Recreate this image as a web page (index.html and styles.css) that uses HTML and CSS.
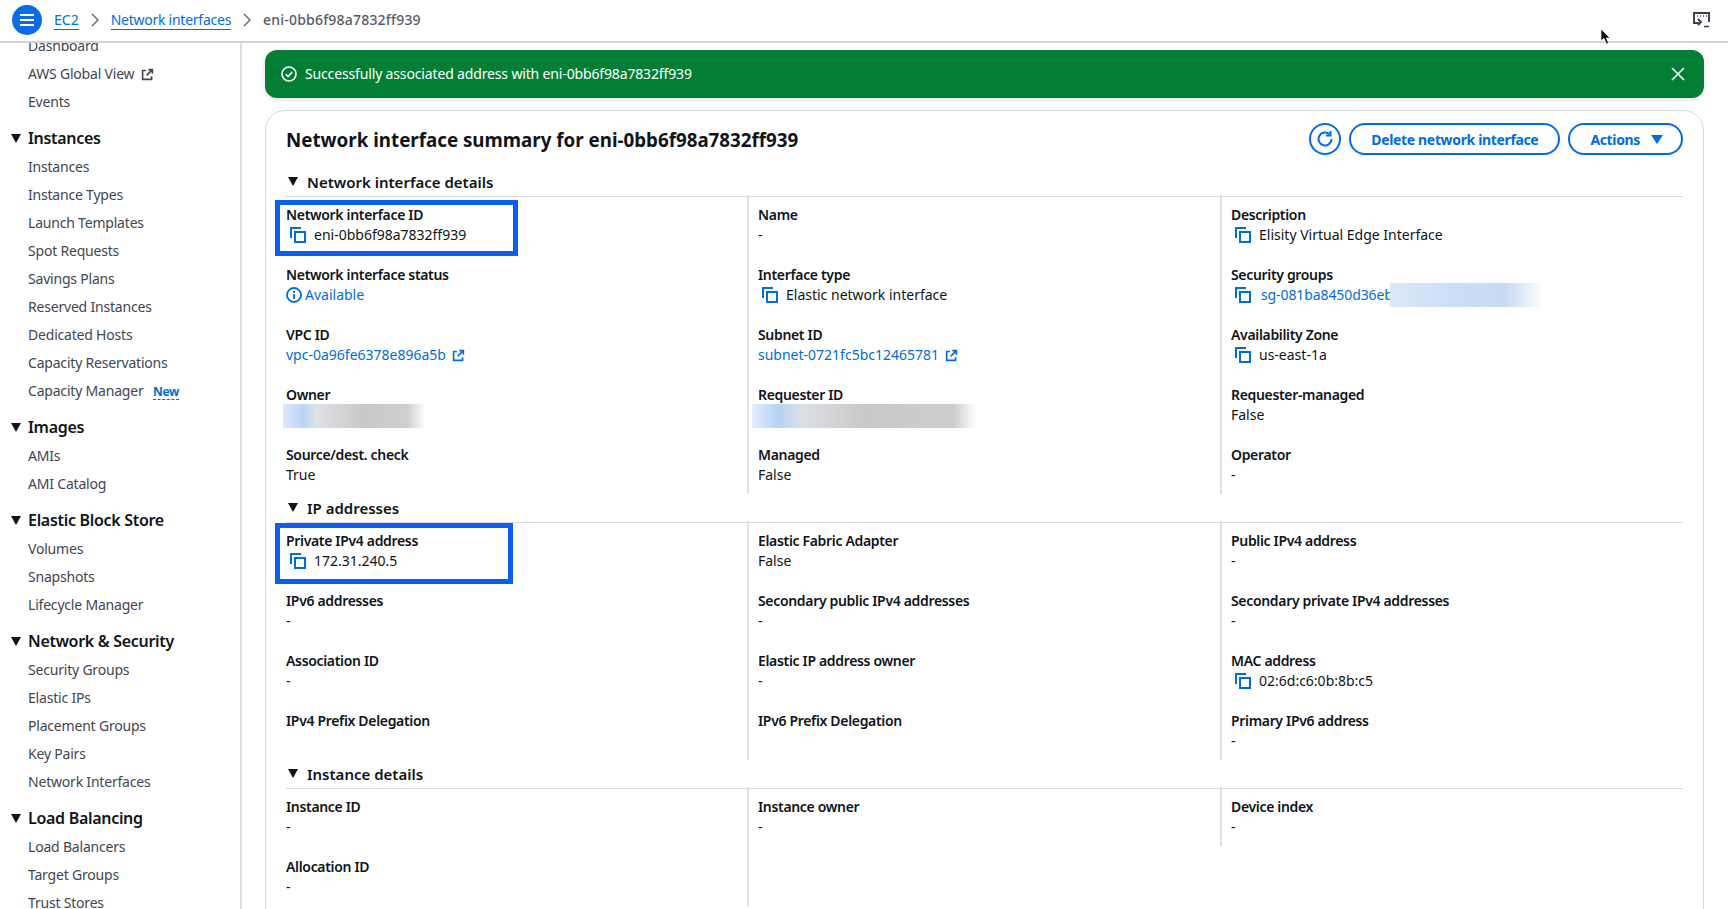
FILE: index.html
```html
<!DOCTYPE html>
<html lang="en">
<head>
    <meta charset="UTF-8">
    <title>Network interface summary</title>
    <link rel="stylesheet" href="styles.css">
</head>
<body>

    <svg class="defs" width="0" height="0">
        <symbol id="copy" viewBox="0 0 16 16">
            <path d="M1 11V1h10" fill="none" stroke="currentColor" stroke-width="2"/>
            <rect x="5" y="5" width="10" height="10" fill="none" stroke="currentColor" stroke-width="2"/>
        </symbol>
        <symbol id="ext" viewBox="0 0 16 16">
            <path d="M6 3H2v11h11v-4" fill="none" stroke="currentColor" stroke-width="2"/>
            <path d="M9 2h5v5M14 2L7 9" fill="none" stroke="currentColor" stroke-width="2"/>
        </symbol>
    </svg>

    <header class="topbar">
        <button class="menu-btn" aria-label="Menu">
            <svg width="16" height="14" viewBox="0 0 16 14"><path d="M1 2h14M1 7h14M1 12h14" stroke="#fff" stroke-width="2"/></svg>
        </button>
        <nav class="crumbs">
            <a href="#">EC2</a>
            <svg class="chev" width="8" height="14" viewBox="0 0 8 14"><path d="M1 1l6 6-6 6" fill="none" stroke="#656871" stroke-width="1.4"/></svg>
            <a class="crumb-long" href="#">Network interfaces</a>
            <svg class="chev" width="8" height="14" viewBox="0 0 8 14"><path d="M1 1l6 6-6 6" fill="none" stroke="#656871" stroke-width="1.4"/></svg>
            <span class="crumb-now">eni-0bb6f98a7832ff939</span>
        </nav>
        <svg class="term" width="17" height="16" viewBox="0 0 17 16">
            <path d="M6 11H1V1h15v9" fill="none" stroke="#3a4049" stroke-width="1.9"/>
            <path d="M4 4h1M7 4h1M10 4h1M13 4h1" stroke="#3a4049" stroke-width="1.6"/>
            <path d="M5 7l3 3-3 3" fill="none" stroke="#3a4049" stroke-width="1.9"/>
            <path d="M11 14.5h5" stroke="#3a4049" stroke-width="1.6"/>
        </svg>
    </header>

    <svg class="cursor" width="11" height="17" viewBox="0 0 11 17">
        <path d="M1 1v12l3-2.6L6.400 16l2.200-1-2.300-5H10z" fill="#111" stroke="#fff" stroke-width=".7"/>
    </svg>

    <div class="layout">
        <aside class="sidebar">
            <div class="side-inner">
                <ul class="side-list">
                    <li>Dashboard</li>
                    <li>AWS Global View <svg class="ext-dark" width="13" height="13"><use href="#ext"/></svg></li>
                    <li>Events</li>
                </ul>
                <h3 class="side-head">Instances</h3>
                <ul class="side-list">
                    <li>Instances</li>
                    <li>Instance Types</li>
                    <li>Launch Templates</li>
                    <li>Spot Requests</li>
                    <li>Savings Plans</li>
                    <li>Reserved Instances</li>
                    <li>Dedicated Hosts</li>
                    <li>Capacity Reservations</li>
                    <li>Capacity Manager <a class="new-tag" href="#">New</a></li>
                </ul>
                <h3 class="side-head">Images</h3>
                <ul class="side-list">
                    <li>AMIs</li>
                    <li>AMI Catalog</li>
                </ul>
                <h3 class="side-head">Elastic Block Store</h3>
                <ul class="side-list">
                    <li>Volumes</li>
                    <li>Snapshots</li>
                    <li>Lifecycle Manager</li>
                </ul>
                <h3 class="side-head">Network &amp; Security</h3>
                <ul class="side-list">
                    <li>Security Groups</li>
                    <li>Elastic IPs</li>
                    <li>Placement Groups</li>
                    <li>Key Pairs</li>
                    <li>Network Interfaces</li>
                </ul>
                <h3 class="side-head">Load Balancing</h3>
                <ul class="side-list">
                    <li>Load Balancers</li>
                    <li>Target Groups</li>
                    <li>Trust Stores</li>
                </ul>
            </div>
        </aside>

        <main class="content">
            <div class="flash">
                <svg width="16" height="16" viewBox="0 0 16 16"><circle cx="8" cy="8" r="7" fill="none" stroke="#fff" stroke-width="1.600"/><path d="M4.800 8.200l2.300 2.300 4.200-4.600" fill="none" stroke="#fff" stroke-width="1.600"/></svg>
                <span class="flash-text">Successfully associated address with eni-0bb6f98a7832ff939</span>
                <svg width="14" height="14" viewBox="0 0 14 14"><path d="M1 1l12 12M13 1L1 13" stroke="#fff" stroke-width="1.600"/></svg>
            </div>

            <section class="card">
                <div class="card-head">
                    <h1>Network interface summary for eni-0bb6f98a7832ff939</h1>
                    <div class="actions">
                        <button class="btn btn-round" aria-label="Refresh">
                            <svg width="18" height="18" viewBox="0 0 18 18"><path d="M15.500 9a6.500 6.500 0 1 1-2.200-4.900" fill="none" stroke="currentColor" stroke-width="2"/><path d="M14.500 1v4.500H10" fill="none" stroke="currentColor" stroke-width="2"/></svg>
                        </button>
                        <button class="btn btn-delete">Delete network interface</button>
                        <button class="btn btn-actions">Actions <svg width="12" height="9" viewBox="0 0 12 9"><path d="M0 0h12L6 9z" fill="currentColor"/></svg></button>
                    </div>
                </div>

                <h2 class="sec-head">Network interface details</h2>
                <div class="cols">
                    <div class="col">
                        <div class="field marked marked-id"><div class="lbl">Network interface ID</div><div class="val"><svg class="copy"><use href="#copy"/></svg>eni-0bb6f98a7832ff939</div></div>
                        <div class="field"><div class="lbl">Network interface status</div><div class="val status"><svg width="16" height="16" viewBox="0 0 16 16"><circle cx="8" cy="8" r="7" fill="none" stroke="currentColor" stroke-width="1.800"/><path d="M8 7v5M8 4v2" stroke="currentColor" stroke-width="1.800"/></svg>Available</div></div>
                        <div class="field"><div class="lbl">VPC ID</div><div class="val"><a href="#">vpc-0a96fe6378e896a5b</a><svg class="ext-link"><use href="#ext"/></svg></div></div>
                        <div class="field"><div class="lbl">Owner</div><div class="blur blur-owner"></div></div>
                        <div class="field"><div class="lbl">Source/dest. check</div><div class="val">True</div></div>
                    </div>
                    <div class="col">
                        <div class="field"><div class="lbl">Name</div><div class="val">-</div></div>
                        <div class="field"><div class="lbl">Interface type</div><div class="val"><svg class="copy"><use href="#copy"/></svg>Elastic network interface</div></div>
                        <div class="field"><div class="lbl">Subnet ID</div><div class="val"><a href="#">subnet-0721fc5bc12465781</a><svg class="ext-link"><use href="#ext"/></svg></div></div>
                        <div class="field"><div class="lbl">Requester ID</div><div class="blur blur-req"></div></div>
                        <div class="field"><div class="lbl">Managed</div><div class="val">False</div></div>
                    </div>
                    <div class="col">
                        <div class="field"><div class="lbl">Description</div><div class="val"><svg class="copy"><use href="#copy"/></svg>Elisity Virtual Edge Interface</div></div>
                        <div class="field"><div class="lbl">Security groups</div><div class="val"><svg class="copy"><use href="#copy"/></svg><a class="sg-link" href="#">sg-081ba8450d36eb</a><div class="blur blur-sg"></div></div></div>
                        <div class="field"><div class="lbl">Availability Zone</div><div class="val"><svg class="copy"><use href="#copy"/></svg>us-east-1a</div></div>
                        <div class="field"><div class="lbl">Requester-managed</div><div class="val">False</div></div>
                        <div class="field"><div class="lbl">Operator</div><div class="val">-</div></div>
                    </div>
                </div>

                <h2 class="sec-head">IP addresses</h2>
                <div class="cols">
                    <div class="col">
                        <div class="field marked marked-ip"><div class="lbl">Private IPv4 address</div><div class="val"><svg class="copy"><use href="#copy"/></svg>172.31.240.5</div></div>
                        <div class="field"><div class="lbl">IPv6 addresses</div><div class="val">-</div></div>
                        <div class="field"><div class="lbl">Association ID</div><div class="val">-</div></div>
                        <div class="field"><div class="lbl">IPv4 Prefix Delegation</div></div>
                    </div>
                    <div class="col">
                        <div class="field"><div class="lbl">Elastic Fabric Adapter</div><div class="val">False</div></div>
                        <div class="field"><div class="lbl">Secondary public IPv4 addresses</div><div class="val">-</div></div>
                        <div class="field"><div class="lbl">Elastic IP address owner</div><div class="val">-</div></div>
                        <div class="field"><div class="lbl">IPv6 Prefix Delegation</div></div>
                    </div>
                    <div class="col">
                        <div class="field"><div class="lbl">Public IPv4 address</div><div class="val">-</div></div>
                        <div class="field"><div class="lbl">Secondary private IPv4 addresses</div><div class="val">-</div></div>
                        <div class="field"><div class="lbl">MAC address</div><div class="val"><svg class="copy"><use href="#copy"/></svg>02:6d:c6:0b:8b:c5</div></div>
                        <div class="field"><div class="lbl">Primary IPv6 address</div><div class="val">-</div></div>
                    </div>
                </div>

                <h2 class="sec-head">Instance details</h2>
                <div class="cols">
                    <div class="col">
                        <div class="field"><div class="lbl">Instance ID</div><div class="val">-</div></div>
                        <div class="field"><div class="lbl">Allocation ID</div><div class="val">-</div></div>
                    </div>
                    <div class="col">
                        <div class="field"><div class="lbl">Instance owner</div><div class="val">-</div></div>
                    </div>
                    <div class="col col-short">
                        <div class="field"><div class="lbl">Device index</div><div class="val">-</div></div>
                    </div>
                </div>
            </section>
        </main>
    </div>

</body>
</html>
```

FILE: styles.css
```css
/* Base */
* {
    box-sizing: border-box;
}

html, body {
    height: 909px;
    overflow: hidden;
}

body {
    margin: 0;
    font-family: "Noto Sans", Arial, sans-serif;
    font-size: 14px;
    line-height: 20px;
    color: #0f141a;
    background-color: #fff;
}

a {
    color: #006ce0;
    text-decoration: none;
}

ul {
    list-style: none;
    margin: 0;
    padding: 0;
}

.defs {
    position: absolute;
}

/* Top bar */
.topbar {
    height: 43px;
    display: flex;
    align-items: center;
    padding: 0 18px 1px 12px;
    border-bottom: 2px solid #d4d4d8;
    background-color: #fff;
}

.menu-btn {
    width: 30px;
    height: 30px;
    border: none;
    border-radius: 50%;
    background-color: #0a6ce8;
    display: flex;
    align-items: center;
    justify-content: center;
    padding: 0;
}

.crumbs {
    display: flex;
    align-items: center;
    margin-left: 12px;
    color: #555b66;
    flex: 1;
}

.crumbs a {
    border-bottom: 1px solid #006ce0;
    line-height: 19px;
}

.crumb-long {
    letter-spacing: -0.25px;
}

.crumb-now {
    font-weight: 500;
    letter-spacing: 0.2px;
}

.chev {
    margin: 0 12px;
}

.term {
    flex: none;
}

.cursor {
    position: absolute;
    left: 1600px;
    top: 28px;
}

/* Layout */
.layout {
    display: flex;
    height: 866px;
}

/* Sidebar */
.sidebar {
    width: 242px;
    flex: none;
    border-right: 2px solid #e0e0e4;
    overflow: hidden;
}

.side-inner {
    margin-top: -11px;
}

.side-list {
    color: #424650;
}

.side-list li {
    height: 28px;
    line-height: 28px;
    padding-left: 28px;
    white-space: nowrap;
    letter-spacing: -0.2px;
}

.ext-dark {
    vertical-align: -2px;
    margin-left: 3px;
}

.new-tag {
    font-size: 12px;
    font-weight: 700;
    margin-left: 6px;
    border-bottom: 1px dashed #006ce0;
    line-height: 15px;
    display: inline-block;
    letter-spacing: -0.3px;
}

.side-head {
    position: relative;
    margin: 9px 0 0;
    height: 28px;
    line-height: 27px;
    padding-left: 28px;
    font-size: 16px;
    font-weight: 600;
    letter-spacing: -0.3px;
    color: #0f141a;
}

.side-head::before,
.sec-head::before {
    content: "";
    position: absolute;
    top: 9px;
    left: 11px;
    border-left: 5px solid transparent;
    border-right: 5px solid transparent;
    border-top: 9px solid #0f141a;
}

/* Main */
.content {
    flex: 1;
    padding: 7px 24px 0 23px;
    overflow: hidden;
}

.flash {
    height: 48px;
    display: flex;
    align-items: center;
    gap: 8px;
    padding: 0 19px 0 16px;
    border-radius: 12px;
    background-color: #037f35;
    color: #fff;
    letter-spacing: -0.15px;
    box-shadow: 0 2px 5px rgba(0, 0, 0, 0.12);
}

.flash-text {
    flex: 1;
}

.card {
    margin-top: 12px;
    padding: 13px 20px 0 20px;
    height: 900px;
    border: 1px solid #d8d8dd;
    border-radius: 20px;
    background-color: #fff;
}

.card-head {
    display: flex;
    align-items: center;
    justify-content: space-between;
    height: 32px;
    margin-bottom: 15px;
}

.card-head h1 {
    margin: 0;
    font-size: 18.75px;
    line-height: 28px;
    font-weight: 700;
}

.actions {
    display: flex;
    gap: 8px;
    margin-top: -2px;
}

.btn {
    height: 32px;
    padding: 0 20px;
    border: 2px solid #006ce0;
    border-radius: 16px;
    background-color: #fff;
    color: #006ce0;
    font-family: inherit;
    font-size: 14px;
    font-weight: 700;
    letter-spacing: -0.35px;
    display: flex;
    align-items: center;
}

.btn-round {
    width: 32px;
    padding: 0;
    justify-content: center;
}

.btn-actions {
    gap: 11px;
    padding-right: 18px;
}

.sec-head {
    position: relative;
    margin: 0;
    height: 26px;
    padding-left: 21px;
    font-size: 15px;
    line-height: 22px;
    font-weight: 600;
    border-bottom: 1px solid #d8d8e0;
}

.sec-head::before {
    top: 6px;
    left: 2px;
}

.cols {
    display: grid;
    grid-template-columns: 461px 473px 1fr;
    margin-bottom: 3px;
}

.col {
    display: flex;
    flex-direction: column;
    gap: 20px;
    margin-top: -2px;
    padding-top: 10px;
    padding-bottom: 9px;
}

.col + .col {
    border-left: 2px solid #e0e0e6;
    padding-left: 9px;
}

.col-short {
    align-self: start;
}

.field {
    height: 40px;
}

.lbl {
    font-weight: 600;
    letter-spacing: -0.33px;
    white-space: nowrap;
}

.val {
    display: flex;
    align-items: center;
    height: 20px;
    white-space: nowrap;
}

.status {
    color: #006ce0;
    gap: 3px;
}

.copy {
    width: 16px;
    height: 16px;
    margin: 0 8px 0 4px;
    color: #006ce0;
    flex: none;
}

.ext-link {
    width: 13px;
    height: 13px;
    margin-left: 6px;
    color: #006ce0;
}

.sg-link {
    margin-left: 2px;
    letter-spacing: -0.1px;
}

/* Highlight boxes drawn on top of the screenshot */
.marked {
    position: relative;
}

.marked::after {
    content: "";
    box-sizing: border-box;
    position: absolute;
    top: -5px;
    left: -11px;
    height: 56px;
    border: 5px solid #0a5ff0;
}

.marked-id::after {
    width: 243px;
}

.marked-ip::after {
    top: -8px;
    height: 61px;
    width: 238px;
}

/* Blurred out values */
.blur {
    height: 24px;
    margin-top: -1px;
}

.blur-owner {
    width: 142px;
    margin-left: -3px;
    background: linear-gradient(90deg, #dbe8f8 0, #b9d5f5 14%, #dfe2e6 24%, #c8c8c8 55%, #cfcfcf 88%, #fff 100%);
}

.blur-req {
    width: 224px;
    margin-left: -6px;
    background: linear-gradient(90deg, #e4eefa 0, #b5d2f5 12%, #dcdfe3 22%, #c9c9c9 50%, #cdcdcd 90%, #fff 100%);
}

.blur-sg {
    width: 153px;
    margin: 0 0 0 -3px;
    flex: none;
    background: linear-gradient(90deg, #dbe8f8 0, #cadff6 40%, #c6daf4 75%, #fff 100%);
}
```
